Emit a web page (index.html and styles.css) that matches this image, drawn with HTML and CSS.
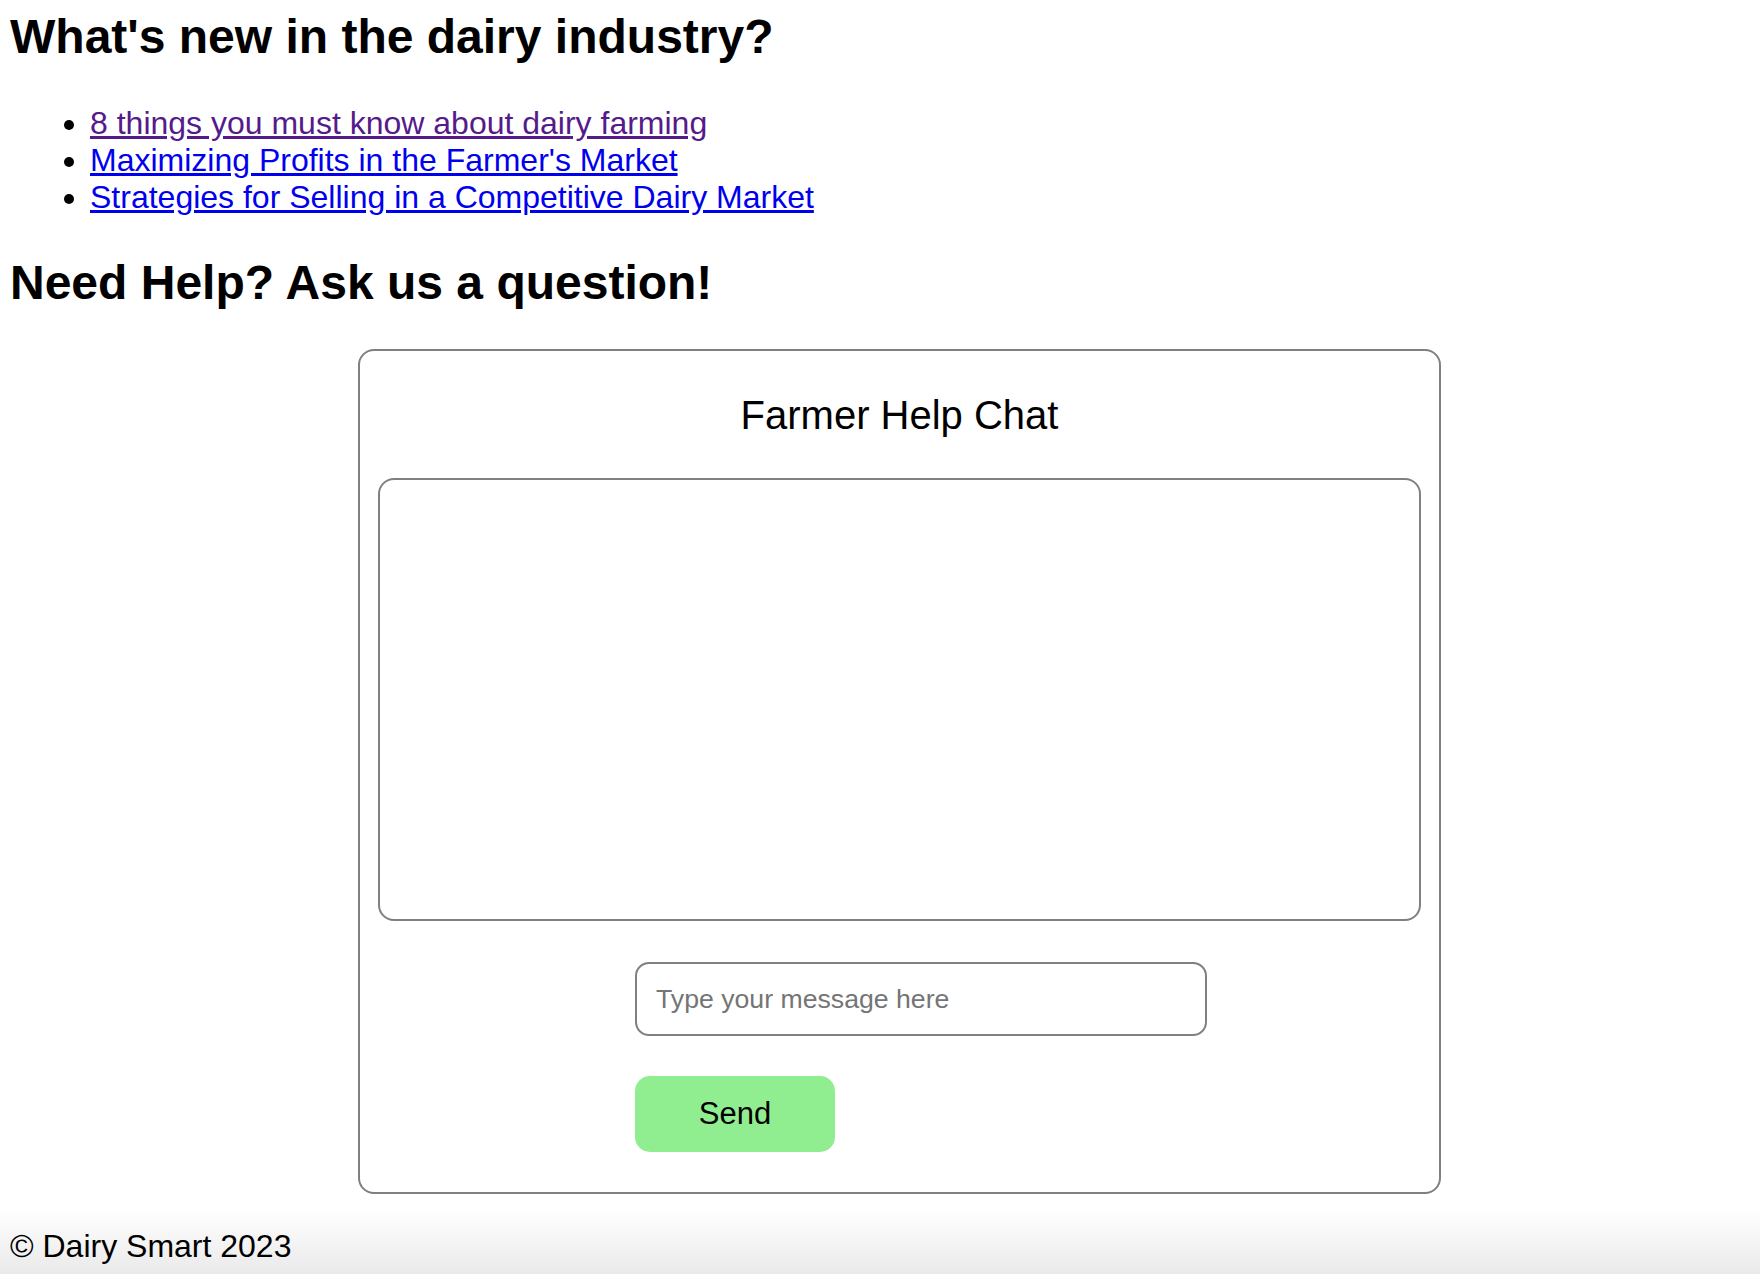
FILE: index.html
```html
<!DOCTYPE html>
<html lang="en">
<head>
<meta charset="utf-8">
<title>Dairy Smart</title>
<link rel="stylesheet" href="styles.css">
</head>
<body>
<main class="page">
  <h1 class="heading heading-first">What's new in the dairy industry?</h1>
  <ul class="news">
    <li><a class="visited" href="#a">8 things you must know about dairy farming</a></li>
    <li><a href="#b">Maximizing Profits in the Farmer's Market</a></li>
    <li><a href="#c">Strategies for Selling in a Competitive Dairy Market</a></li>
  </ul>
  <h1 class="heading">Need Help? Ask us a question!</h1>
  <section class="chat">
    <h2 class="chat-title">Farmer Help Chat</h2>
    <div class="chat-log"></div>
    <form class="chat-form">
      <input class="chat-input" type="text" placeholder="Type your message here">
      <button class="chat-send" type="button">Send</button>
    </form>
  </section>
</main>
<footer class="footer">© Dairy Smart 2023</footer>
</body>
</html>
```
FILE: styles.css
```css
html, body {
  margin: 0;
  padding: 0;
  background: #fff;
}
body {
  font-family: "Liberation Sans", Arial, Helvetica, sans-serif;
  color: #000;
}
.page {
  padding: 0 10px;
  overflow: hidden;
}
.heading {
  font-size: 48px;
  font-weight: bold;
  line-height: 56px;
  margin: 39px 0 0 0;
}
.heading-first {
  margin-top: 9px;
}
.news {
  margin: 40px 0 0 0;
  padding-left: 80px;
  font-size: 32px;
  line-height: 37px;
}
.news a {
  color: #0000ee;
}
.news a.visited {
  color: #551a8b;
}
.chat {
  box-sizing: border-box;
  width: 1083px;
  margin: 38px 0 0 348px;
  border: 2px solid #808080;
  border-radius: 16px;
  padding: 0 18px 40px 18px;
}
.chat-title {
  font-size: 40px;
  font-weight: normal;
  line-height: 46px;
  text-align: center;
  margin: 41px 0 40px 0;
}
.chat-log {
  height: 443px;
  border: 2px solid #808080;
  border-radius: 16px;
  box-sizing: border-box;
}
.chat-form {
  display: flex;
  flex-direction: column;
  align-items: flex-start;
  gap: 40px;
  margin-top: 41px;
  padding-left: 257px;
}
.chat-input {
  box-sizing: border-box;
  width: 572px;
  height: 74px;
  border: 2px solid #808080;
  border-radius: 14px;
  padding: 0 19px;
  font-family: "Liberation Sans", Arial, Helvetica, sans-serif;
  font-size: 26.67px;
  color: #000;
  outline: none;
}
.chat-input::placeholder {
  color: #757575;
}
.chat-send {
  width: 200px;
  height: 76px;
  border: none;
  border-radius: 15px;
  background: #90ee90;
  color: #000;
  font-family: "Liberation Sans", Arial, Helvetica, sans-serif;
  font-size: 31px;
  padding: 0;
}
.footer {
  margin-top: 16px;
  padding: 18px 10px 13px 10px;
  font-size: 32px;
  line-height: 37px;
  background: linear-gradient(to bottom, #ffffff, #e8e8e8);
}
```
